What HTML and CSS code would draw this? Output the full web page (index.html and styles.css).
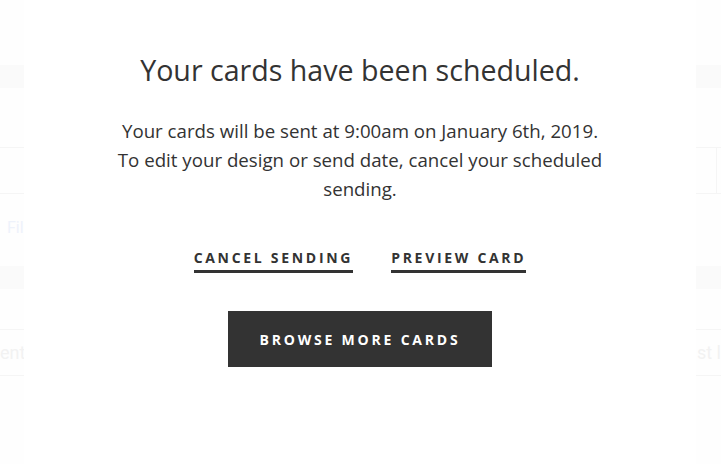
FILE: index.html
```html
<!DOCTYPE html>
<html>
<head>
<meta charset="utf-8">
<link rel="stylesheet" href="styles.css">
</head>
<body>
<div class="page">
  <div class="bg-block"></div>
  <div class="bg-row bg-boxed">
    <div class="bg-box"></div>
  </div>
  <div class="bg-label"><span class="bg-fil">Fil</span></div>
  <div class="bg-block bg-block2"></div>
  <div class="bg-row bg-textrow">
    <span class="bg-left">ent</span>
    <span class="bg-right">st l</span>
  </div>
</div>

<div class="modal">
  <h1 class="title">Your cards have been scheduled.</h1>
  <p class="desc">Your cards will be sent at 9:00am on January 6th, 2019.<br>To edit your design or send date, cancel your scheduled sending.</p>
  <div class="links">
    <a class="link">Cancel Sending</a>
    <a class="link">Preview Card</a>
  </div>
  <button class="btn">Browse More Cards</button>
</div>
</body>
</html>
```

FILE: styles.css
```css
html, body {
  margin: 0;
  padding: 0;
  background: #fefefe;
  font-family: "Open Sans", "Liberation Sans", sans-serif;
  color: #333;
}

.page {
  padding-top: 65px;
}

.bg-block {
  height: 23px;
  background: #fafafa;
}

.bg-row {
  border-top: 1px solid #f5f5f5;
  border-bottom: 1px solid #f5f5f5;
}

.bg-boxed {
  margin-top: 59px;
  height: 45px;
  display: flex;
  justify-content: flex-end;
  padding-right: 4px;
}

.bg-box {
  width: 20px;
  border-right: 1px solid #f5f5f5;
}

.bg-label {
  height: 66px;
  padding-bottom: 6px;
  display: flex;
  align-items: center;
  padding-left: 7px;
}

.bg-fil {
  font-size: 16px;
  color: #eef2fb;
  font-family: "Roboto", sans-serif;
}

.bg-textrow {
  margin-top: 40px;
  height: 45px;
  display: flex;
  justify-content: space-between;
  align-items: center;
  font-family: "Roboto", sans-serif;
  font-size: 18px;
  color: #f2f2f2;
}

.modal {
  position: fixed;
  top: 0;
  bottom: 0;
  left: 24px;
  right: 25px;
  background: #fff;
  display: flex;
  flex-direction: column;
  align-items: center;
  padding-top: 48px;
  box-sizing: border-box;
}

.title {
  margin: 0;
  font-size: 28.6px;
  font-weight: 400;
  line-height: 44px;
  color: #333;
}

.desc {
  margin: 24px 0 0;
  width: 520px;
  text-align: center;
  font-size: 18.7px;
  line-height: 29px;
  color: #333;
}

.links {
  margin-top: 45px;
  display: flex;
  gap: 38px;
}

.link {
  font-size: 14px;
  font-weight: 700;
  letter-spacing: 2.7px;
  text-transform: uppercase;
  color: #333;
  border-bottom: 3px solid #333;
  padding-bottom: 2px;
  line-height: 20px;
}

.btn {
  margin-top: 38px;
  width: 264px;
  height: 56px;
  background: #333;
  color: #fff;
  border: none;
  font-family: inherit;
  font-size: 14px;
  font-weight: 700;
  letter-spacing: 2.8px;
  text-transform: uppercase;
}
```
